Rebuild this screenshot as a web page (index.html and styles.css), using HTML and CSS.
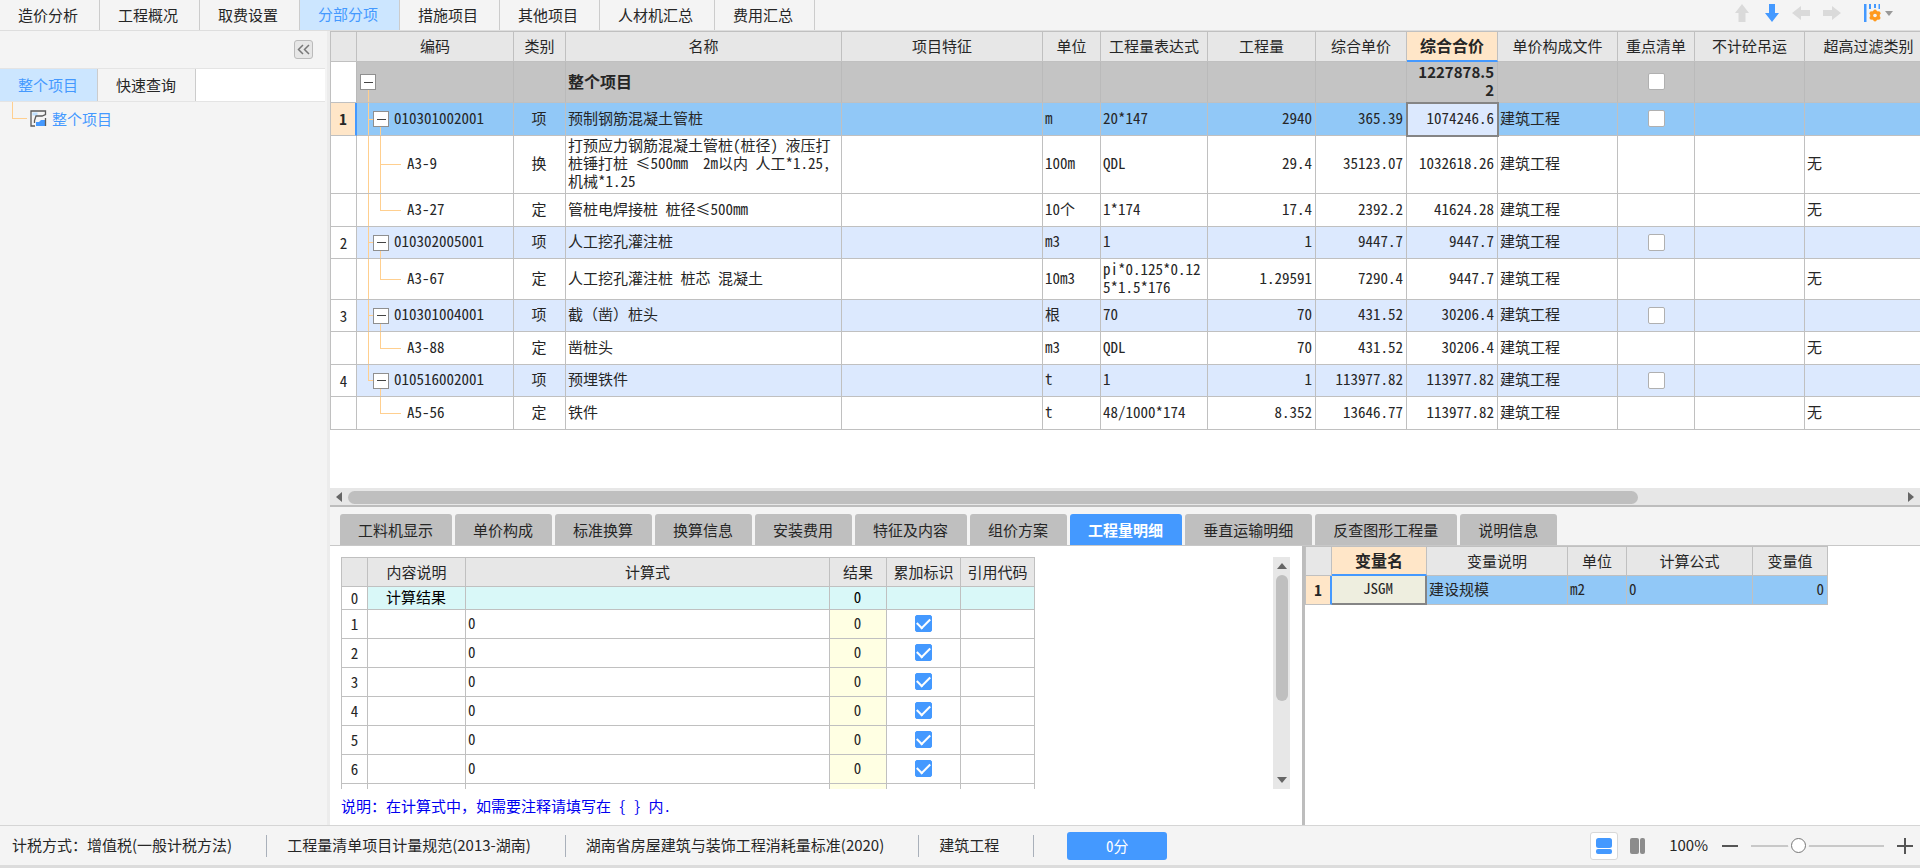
FILE: index.html
```html
<!DOCTYPE html>
<html lang="zh-CN">
<head>
<meta charset="utf-8">
<title>分部分项</title>
<link rel="stylesheet" href="styles.css">
</head>
<body>
<div class="app">
  <header class="topbar">
    <nav class="main-tabs">
      <button class="main-tab">造价分析</button>
      <button class="main-tab">工程概况</button>
      <button class="main-tab">取费设置</button>
      <button class="main-tab active">分部分项</button>
      <button class="main-tab">措施项目</button>
      <button class="main-tab">其他项目</button>
      <button class="main-tab">人材机汇总</button>
      <button class="main-tab">费用汇总</button>
    </nav>
    <div class="tools">
      <button class="tool" aria-label="上移"><svg width="14" height="18" viewBox="0 0 14 18"><path fill="#dadada" d="M7 0l7 9h-3.500v9h-7V9H0z"/></svg></button>
      <button class="tool" aria-label="下移"><svg width="14" height="18" viewBox="0 0 14 18"><path fill="#4499ff" d="M7 18l7-9h-4V0H4v9H0z"/></svg></button>
      <button class="tool" aria-label="左移"><svg width="18" height="14" viewBox="0 0 18 14"><path fill="#dadada" d="M0 7l9-7v4h9v6H9v4z"/></svg></button>
      <button class="tool" aria-label="右移"><svg width="18" height="14" viewBox="0 0 18 14"><path fill="#dadada" d="M18 7L9 0v4H0v6h9v4z"/></svg></button>
      <button class="tool settings" aria-label="列设置">
        <svg width="18" height="20" viewBox="0 0 18 20"><path fill="#4499ff" d="M1 1h2.500v18H1zM6 1h2v5H6zM11 1h2v4h-2zM15.500 1h1.500v5h-1.500z"/><g fill="#ff9a1e"><circle cx="12" cy="12.500" r="4.800"/><circle cx="12" cy="8.200" r="1.800"/><circle cx="12" cy="16.800" r="1.800"/><circle cx="8.400" cy="10.200" r="1.900"/><circle cx="15.600" cy="10.200" r="1.900"/><circle cx="8.400" cy="14.800" r="1.900"/><circle cx="15.600" cy="14.800" r="1.900"/></g><circle cx="12" cy="12.500" r="1.800" fill="#f4f4f4"/></svg>
        <svg width="8" height="5" viewBox="0 0 8 5"><path fill="#999" d="M0 0h8L4 5z"/></svg>
      </button>
    </div>
  </header>

  <div class="body">
    <aside class="sidebar">
      <div class="side-head">
        <button class="collapse" aria-label="收起"><svg width="13" height="11" viewBox="0 0 13 11"><path fill="none" stroke="#777" stroke-width="1.500" d="M6 1L1.500 5.500 6 10M12 1L7.500 5.500 12 10"/></svg></button>
      </div>
      <div class="side-tabs">
        <button class="side-tab active">整个项目</button>
        <button class="side-tab">快速查询</button>
      </div>
      <div class="side-tree">
        <span class="elbow"></span>
        <svg width="17" height="17" viewBox="0 0 17 17"><path fill="#bfe0ff" d="M2.500 2.500h5v3h-5z"/><path fill="#4499ff" d="M6 16v-4h3l2-2h4v6z"/><path fill="none" stroke="#5a5a5a" stroke-width="1.300" d="M5 16H1V1h14.500v3.500L12 6H6L4.500 10.500V13M15.500 8v8"/></svg>
        <a class="side-link" href="#">整个项目</a>
      </div>
    </aside>

    <main class="work">
      <section class="upper">
        <div class="grid-view">
          <table class="grid bill">
            <colgroup><col class="w26"><col class="w157"><col class="w52"><col class="w276"><col class="w201"><col class="w58"><col class="w107"><col class="w108"><col class="w91"><col class="w91"><col class="w120"><col class="w77"><col class="w110"><col class="w128"></colgroup>
            <thead>
              <tr><th></th><th>编码</th><th>类别</th><th>名称</th><th>项目特征</th><th>单位</th><th>工程量表达式</th><th>工程量</th><th>综合单价</th><th class="current-col">综合合价</th><th>单价构成文件</th><th>重点清单</th><th>不计砼吊运</th><th>超高过滤类别</th></tr>
            </thead>
            <tbody>
              <tr class="total h41"><td class="idx"></td><td class="tree root"><div class="node"><button class="toggle" aria-label="折叠"></button></div></td><td></td><td>整个项目</td><td></td><td></td><td></td><td></td><td></td><td class="num sum">1227878.5<br>2</td><td></td><td class="tick"><input type="checkbox" aria-label="重点清单"></td><td></td><td></td></tr>
              <tr class="selected"><td class="idx">1</td><td class="tree item"><div class="node"><button class="toggle" aria-label="折叠"></button><span>010301002001</span></div></td><td class="mid">项</td><td>预制钢筋混凝土管桩</td><td></td><td>m</td><td>20*147</td><td class="num">2940</td><td class="num">365.39</td><td class="num current-cell">1074246.6</td><td>建筑工程</td><td class="tick"><input type="checkbox" aria-label="重点清单"></td><td></td><td></td></tr>
              <tr class="h58"><td class="idx"></td><td class="tree leaf more"><div class="node">A3-9</div></td><td class="mid">换</td><td>打预应力钢筋混凝土管桩(桩径) 液压打<br>桩锤打桩 ≤500mm  2m以内 人工*1.25,<br>机械*1.25</td><td></td><td>100m</td><td>QDL</td><td class="num">29.4</td><td class="num">35123.07</td><td class="num">1032618.26</td><td>建筑工程</td><td></td><td></td><td>无</td></tr>
              <tr><td class="idx"></td><td class="tree leaf"><div class="node">A3-27</div></td><td class="mid">定</td><td>管桩电焊接桩 桩径≤500mm</td><td></td><td>10个</td><td>1*174</td><td class="num">17.4</td><td class="num">2392.2</td><td class="num">41624.28</td><td>建筑工程</td><td></td><td></td><td>无</td></tr>
              <tr class="list"><td class="idx">2</td><td class="tree item"><div class="node"><button class="toggle" aria-label="折叠"></button><span>010302005001</span></div></td><td class="mid">项</td><td>人工挖孔灌注桩</td><td></td><td>m3</td><td>1</td><td class="num">1</td><td class="num">9447.7</td><td class="num">9447.7</td><td>建筑工程</td><td class="tick"><input type="checkbox" aria-label="重点清单"></td><td></td><td></td></tr>
              <tr class="h41"><td class="idx"></td><td class="tree leaf"><div class="node">A3-67</div></td><td class="mid">定</td><td>人工挖孔灌注桩 桩芯 混凝土</td><td></td><td>10m3</td><td>pi*0.125*0.12<br>5*1.5*176</td><td class="num">1.29591</td><td class="num">7290.4</td><td class="num">9447.7</td><td>建筑工程</td><td></td><td></td><td>无</td></tr>
              <tr class="list"><td class="idx">3</td><td class="tree item"><div class="node"><button class="toggle" aria-label="折叠"></button><span>010301004001</span></div></td><td class="mid">项</td><td class="full">截（凿）桩头</td><td></td><td>根</td><td>70</td><td class="num">70</td><td class="num">431.52</td><td class="num">30206.4</td><td>建筑工程</td><td class="tick"><input type="checkbox" aria-label="重点清单"></td><td></td><td></td></tr>
              <tr><td class="idx"></td><td class="tree leaf"><div class="node">A3-88</div></td><td class="mid">定</td><td>凿桩头</td><td></td><td>m3</td><td>QDL</td><td class="num">70</td><td class="num">431.52</td><td class="num">30206.4</td><td>建筑工程</td><td></td><td></td><td>无</td></tr>
              <tr class="list"><td class="idx">4</td><td class="tree item last"><div class="node"><button class="toggle" aria-label="折叠"></button><span>010516002001</span></div></td><td class="mid">项</td><td>预埋铁件</td><td></td><td>t</td><td>1</td><td class="num">1</td><td class="num">113977.82</td><td class="num">113977.82</td><td>建筑工程</td><td class="tick"><input type="checkbox" aria-label="重点清单"></td><td></td><td></td></tr>
              <tr><td class="idx"></td><td class="tree leaf last"><div class="node">A5-56</div></td><td class="mid">定</td><td>铁件</td><td></td><td>t</td><td>48/1000*174</td><td class="num">8.352</td><td class="num">13646.77</td><td class="num">113977.82</td><td>建筑工程</td><td></td><td></td><td>无</td></tr>
            </tbody>
          </table>
        </div>
        <div class="hscroll">
          <svg width="6" height="10" viewBox="0 0 6 10"><path fill="#666" d="M6 0v10L0 5z"/></svg>
          <div class="htrack"><div class="hthumb"></div></div>
          <svg width="6" height="10" viewBox="0 0 6 10"><path fill="#666" d="M0 0v10l6-5z"/></svg>
        </div>
      </section>

      <section class="lower">
        <nav class="sub-tabs">
          <button class="sub-tab">工料机显示</button>
          <button class="sub-tab">单价构成</button>
          <button class="sub-tab">标准换算</button>
          <button class="sub-tab">换算信息</button>
          <button class="sub-tab">安装费用</button>
          <button class="sub-tab">特征及内容</button>
          <button class="sub-tab">组价方案</button>
          <button class="sub-tab active">工程量明细</button>
          <button class="sub-tab">垂直运输明细</button>
          <button class="sub-tab">反查图形工程量</button>
          <button class="sub-tab">说明信息</button>
        </nav>
        <div class="panels">
          <div class="detail">
            <div class="detail-main">
              <div class="detail-view">
                <table class="grid calc">
                  <colgroup><col class="w26"><col class="w98"><col class="w364"><col class="w57"><col class="w74"><col class="w74"></colgroup>
                  <thead><tr><th></th><th>内容说明</th><th>计算式</th><th>结果</th><th>累加标识</th><th>引用代码</th></tr></thead>
                  <tbody>
                    <tr class="result"><td class="idx">0</td><td class="mid">计算结果</td><td></td><td class="mid">0</td><td></td><td></td></tr>
                    <tr><td class="idx">1</td><td></td><td>0</td><td class="mid value">0</td><td class="tick"><input type="checkbox" checked aria-label="累加标识"></td><td></td></tr>
                    <tr><td class="idx">2</td><td></td><td>0</td><td class="mid value">0</td><td class="tick"><input type="checkbox" checked aria-label="累加标识"></td><td></td></tr>
                    <tr><td class="idx">3</td><td></td><td>0</td><td class="mid value">0</td><td class="tick"><input type="checkbox" checked aria-label="累加标识"></td><td></td></tr>
                    <tr><td class="idx">4</td><td></td><td>0</td><td class="mid value">0</td><td class="tick"><input type="checkbox" checked aria-label="累加标识"></td><td></td></tr>
                    <tr><td class="idx">5</td><td></td><td>0</td><td class="mid value">0</td><td class="tick"><input type="checkbox" checked aria-label="累加标识"></td><td></td></tr>
                    <tr><td class="idx">6</td><td></td><td>0</td><td class="mid value">0</td><td class="tick"><input type="checkbox" checked aria-label="累加标识"></td><td></td></tr>
                    <tr><td class="idx"></td><td></td><td></td><td class="value"></td><td></td><td></td></tr>
                  </tbody>
                </table>
              </div>
              <div class="vscroll">
                <svg width="10" height="6" viewBox="0 0 10 6"><path fill="#666" d="M0 6h10L5 0z"/></svg>
                <div class="vtrack"><div class="vthumb"></div></div>
                <svg width="10" height="6" viewBox="0 0 10 6"><path fill="#666" d="M0 0h10L5 6z"/></svg>
              </div>
            </div>
            <p class="note"><span class="full">说明：在计算式中，如需要注释请填写在</span> { } 内.</p>
          </div>
          <div class="vars">
            <table class="grid var">
              <colgroup><col class="w26"><col class="w95"><col class="w141"><col class="w59"><col class="w126"><col class="w75"></colgroup>
              <thead><tr><th></th><th class="current-col">变量名</th><th>变量说明</th><th>单位</th><th>计算公式</th><th>变量值</th></tr></thead>
              <tbody><tr class="selected"><td class="idx">1</td><td class="mid var-cell">JSGM</td><td>建设规模</td><td>m2</td><td>0</td><td class="num">0</td></tr></tbody>
            </table>
          </div>
        </div>
      </section>
    </main>
  </div>

  <footer class="status">
    <span class="status-item">计税方式：增值税(一般计税方法)</span>
    <span class="status-item">工程量清单项目计量规范(2013-湖南)</span>
    <span class="status-item">湖南省房屋建筑与装饰工程消耗量标准(2020)</span>
    <span class="status-item">建筑工程</span>
    <button class="score">0分</button>
    <div class="zoom">
      <button class="layout on" aria-label="上下布局"><svg width="16" height="16" viewBox="0 0 16 16"><rect width="16" height="10" rx="2.500" fill="#4499ff"/><rect y="11" width="16" height="5" rx="2" fill="#4499ff"/></svg></button>
      <button class="layout" aria-label="左右布局"><svg width="16" height="16" viewBox="0 0 16 16"><rect width="9" height="16" rx="2" fill="#8c8c8c"/><rect x="10" width="5" height="16" rx="2" fill="#8c8c8c"/></svg></button>
      <label class="zoom-label" for="zoom-range">100%</label>
      <button class="step" aria-label="缩小"><svg width="16" height="16" viewBox="0 0 16 16"><path stroke="#555" stroke-width="2" d="M0 8h16"/></svg></button>
      <input id="zoom-range" class="range" type="range" min="0" max="100" value="34">
      <button class="step" aria-label="放大"><svg width="16" height="16" viewBox="0 0 16 16"><path stroke="#555" stroke-width="2" d="M0 8h16M8 0v16"/></svg></button>
    </div>
  </footer>
</div>
</body>
</html>
```
FILE: styles.css
```css
:root {
  --blue: #4499ff;
  --line: #c0c0c0;
  --panel: #f4f4f4;
  --head: #e7e7e7;
  --peach: #ffe6c8;
  --tree: #ffcf8f;
  --text: #262626;
}

* { box-sizing: border-box; }

body {
  margin: 0;
  font-family: "Noto Sans CJK SC", sans-serif;
  font-size: 15px;
  line-height: 18px;
  color: var(--text);
  background: var(--panel);
}

button {
  margin: 0;
  padding: 0;
  border: 0;
  background: none;
  font: inherit;
  color: inherit;
  white-space: nowrap;
}

svg { display: block; flex: none; }

.app {
  display: flex;
  flex-direction: column;
  height: 100vh;
  overflow: hidden;
  border-bottom: 3px solid #dcdcdc;
}

/* top tabs and tools */
.topbar {
  display: flex;
  flex: 0 0 31px;
  justify-content: space-between;
  border-bottom: 1px solid #dedede;
}

.main-tabs { display: flex; }

.main-tab {
  padding: 0 21px 0 18px;
  border-right: 1px solid #ccc;
}

.main-tab.active,
.side-tab.active {
  background: #cce6ff;
  color: var(--blue);
}

.main-tab.active { padding-bottom: 2px; }

.tools {
  display: flex;
  align-items: center;
  gap: 13px;
  padding: 0 27px 4px 0;
}

.tool { display: flex; align-items: center; }
.tool:nth-child(2) { padding-left: 3px; }
.settings { gap: 4px; padding-left: 9px; }

/* side panel */
.body { display: flex; flex: 1; min-height: 0; }

.sidebar {
  flex: 0 0 330px;
  padding-right: 2px;
  border-right: 3px solid #ececec;
}

.side-head {
  display: flex;
  justify-content: flex-end;
  align-items: center;
  height: 37px;
  padding-right: 12px;
}

.collapse {
  display: grid;
  place-items: center;
  width: 19px;
  height: 19px;
  border: 1px solid #bbb;
  border-radius: 3px;
  background: #e6e6e6;
}

.side-tabs {
  display: flex;
  height: 34px;
  border-top: 1px solid #e4e4e4;
  border-bottom: 1px solid #e4e4e4;
  background: #fff;
}

.side-tab {
  padding: 0 19px 0 18px;
  border-right: 1px solid #ccc;
  background: var(--panel);
}

.side-tree {
  display: flex;
  align-items: flex-start;
  padding-left: 12px;
}

.elbow {
  width: 15px;
  height: 17px;
  margin-right: 3px;
  border: solid var(--tree);
  border-width: 0 0 1px 1px;
}

.side-tree svg { margin-top: 8px; }

.side-link {
  margin: 8px 0 0 5px;
  color: var(--blue);
  text-decoration: none;
}

/* data grids */
.work {
  display: flex;
  flex: 1;
  flex-direction: column;
  min-width: 0;
  background: #fff;
}

.upper {
  display: flex;
  flex: 3 1 0;
  flex-direction: column;
  min-height: 0;
}

.grid-view { flex: 1; min-height: 0; overflow: hidden; }

.grid {
  width: min-content;
  table-layout: fixed;
  border-collapse: separate;
  border-spacing: 0;
  border: solid var(--line);
  border-width: 1px 0 0 1px;
}

.grid th,
.grid td {
  padding: 0;
  border: solid var(--line);
  border-width: 0 1px 1px 0;
}

.grid th {
  height: 29px;
  padding-bottom: 1px;
  background: var(--head);
  font-weight: 400;
}

.grid td {
  padding: 0 3px 3px 2px;
  text-align: left;
  vertical-align: middle;
  white-space: pre;
  font-feature-settings: "hwid";
}

.grid td.idx { padding: 0; text-align: center; background: #fff; }
.grid td.mid { text-align: center; }
.grid td.num { text-align: right; }
.grid td.tick { padding: 0; text-align: center; }

.w26 { width: 26px; }
.w52 { width: 52px; }
.w57 { width: 57px; }
.w58 { width: 58px; }
.w59 { width: 59px; }
.w74 { width: 74px; }
.w75 { width: 75px; }
.w77 { width: 77px; }
.w91 { width: 91px; }
.w95 { width: 95px; }
.w98 { width: 98px; }
.w107 { width: 107px; }
.w108 { width: 108px; }
.w110 { width: 110px; }
.w120 { width: 120px; }
.w126 { width: 126px; }
.w128 { width: 128px; }
.w141 { width: 141px; }
.w157 { width: 157px; }
.w201 { width: 201px; }
.w276 { width: 276px; }
.w364 { width: 364px; }

.bill { width: 1603px; }
.calc { width: 694px; }
.var { width: 523px; }

.bill th { height: 30px; padding-bottom: 2px; }
.bill td { height: 33px; }
.bill .list td { height: 32px; }
.bill .h41 td { height: 41px; }
.bill .h58 td { height: 58px; }

.grid th.current-col {
  border-bottom: 2px solid var(--blue);
  background: var(--peach);
  font-size: 16px;
  font-weight: 700;
}

.total td {
  border-right-color: #bababa;
  background-color: #c4c4c4;
  font-size: 16px;
  font-weight: 700;
}

.grid td.sum { font-size: 15px; font-feature-settings: normal; }
.list td { background-color: #dce9fe; }
.selected td { background-color: #91c8f7; }

.selected td.idx {
  border-right: 2px solid var(--blue);
  background: var(--peach);
  font-weight: 700;
}

.grid td.current-cell {
  background: #dce9fe;
  outline: 2px solid #858585;
  outline-offset: -1px;
}

.grid td.var-cell {
  border-right: 2px solid #858585;
  border-bottom: 2px solid #858585;
  background: #eeeedf;
}

/* punctuation keeps its full width */
.grid td.full,
.full { font-feature-settings: normal; }

/* tree column */
.grid td.tree {
  padding: 0;
  background-repeat: no-repeat;
  --stroke: linear-gradient(var(--tree), var(--tree));
}

.node { display: flex; align-items: center; }

.tree.root {
  background-image: var(--stroke);
  background-position: 11px 100%;
  background-size: 1px 50%;
}

.root .node { padding-left: 3px; }

.tree.item {
  background-image: var(--stroke), var(--stroke), var(--stroke);
  background-position: 11px 0, 11px 50%, 23px 100%;
  background-size: 1px 100%, 6px 1px, 1px 50%;
}

.item .node { gap: 5px; padding-left: 16px; }
.item span { padding-bottom: 3px; }
.tree.item.last { background-size: 1px 50%, 6px 1px, 1px 50%; }

.tree.leaf {
  background-image: var(--stroke), var(--stroke), var(--stroke);
  background-position: 11px 0, 23px 0, 23px 50%;
  background-size: 1px 100%, 1px 50%, 21px 1px;
}

.tree.leaf.more { background-size: 1px 100%, 1px 100%, 21px 1px; }
.tree.leaf.last { background-size: 0 0, 1px 50%, 21px 1px; }
.leaf .node { padding: 0 0 3px 50px; }

.toggle {
  width: 16px;
  height: 16px;
  border: 1px solid #8f8f8f;
  background: linear-gradient(#444, #444) center / 9px 1px no-repeat #fff;
}

input[type="checkbox"] {
  display: inline-grid;
  place-items: center;
  width: 17px;
  height: 17px;
  margin: 0;
  border: 1px solid #b0b0b0;
  border-radius: 2px;
  background: #fff;
  vertical-align: top;
  appearance: none;
}

input[type="checkbox"]:checked { border-color: var(--blue); background: var(--blue); }

input[type="checkbox"]:checked::after {
  content: "";
  width: 11px;
  height: 6px;
  margin-bottom: 3px;
  border: solid #fff;
  border-width: 0 0 2px 2px;
  transform: rotate(-45deg);
}

.hscroll {
  display: flex;
  flex: 0 0 19px;
  align-items: center;
  gap: 6px;
  padding: 1px 6px 0;
  border-bottom: 2px solid #bdbdbd;
  background: var(--head);
}

.htrack { flex: 1; }
.hthumb { width: 83%; height: 13px; border-radius: 7px; background: #bfbfbf; }

/* lower pane */
.lower {
  display: flex;
  flex: 2 1 0;
  flex-direction: column;
  min-height: 0;
}

.sub-tabs {
  display: flex;
  flex: 0 0 39px;
  gap: 3px;
  padding: 7px 10px 0;
  border-bottom: 1px solid #c8c8c8;
  background: var(--panel);
}

.sub-tab {
  height: 31px;
  padding: 0 19px 0 18px;
  border-radius: 3px 3px 0 0;
  background: #bfbfbf;
}

.sub-tab.active { background: var(--blue); color: #fff; font-weight: 700; }

.panels { display: flex; flex: 1; min-height: 0; }

.detail {
  display: flex;
  flex: 0 0 975px;
  flex-direction: column;
  padding: 11px 12px 0 11px;
  border-right: 3px solid #bdbdbd;
}

.detail-main {
  display: flex;
  flex: 1;
  justify-content: space-between;
  min-height: 0;
}

.detail-view { overflow: hidden; }
.calc td { height: 29px; }
.calc .result td { height: 23px; }
.calc .result td:not(.idx) { background: #d9f8f8; color: #000; }
.calc td.value { background: #ffffe3; }

.vscroll {
  display: flex;
  flex-direction: column;
  align-items: center;
  gap: 6px;
  width: 17px;
  padding: 6px 0;
  background: var(--head);
}

.vtrack { flex: 1; width: 12px; }
.vthumb { height: 64%; border-radius: 6px; background: #bfbfbf; }

.note {
  flex: 0 0 36px;
  margin: 0;
  padding-top: 8px;
  color: #0000f0;
  font-feature-settings: "hwid";
}

.vars { flex: 1; min-width: 0; overflow: hidden; }
.var td { height: 29px; }

/* status bar */
.status {
  display: flex;
  flex: 0 0 40px;
  align-items: center;
  padding: 0 7px 0 12px;
  border-top: 1px solid #d5d5d5;
  white-space: nowrap;
}

.status-item {
  margin-right: 20px;
  padding: 1px 34px 3px 0;
  border-right: 1px solid #a9b0ba;
}

.score {
  width: 100px;
  height: 28px;
  margin-left: 13px;
  border-radius: 3px;
  background: var(--blue);
  color: #fff;
  font-feature-settings: "hwid";
}

.zoom { display: flex; align-items: center; margin-left: auto; }

.layout {
  display: grid;
  place-items: center;
  width: 28px;
  height: 28px;
  margin-right: 6px;
  border: 1px solid transparent;
  border-radius: 3px;
}

.layout.on { border-color: #d8d8d8; background: #fff; }
.zoom-label { margin: 0 14px 0 11px; padding-bottom: 1px; }

.range {
  width: 133px;
  height: 16px;
  margin: 0 13px;
  background: linear-gradient(#c8c8c8, #c8c8c8) center / 100% 2px no-repeat;
  appearance: none;
}

.range::-webkit-slider-thumb {
  width: 15px;
  height: 15px;
  border: 1px solid #777;
  border-radius: 50%;
  background: #fff;
  box-shadow: 0 0 0 3px var(--panel);
  appearance: none;
}
```
